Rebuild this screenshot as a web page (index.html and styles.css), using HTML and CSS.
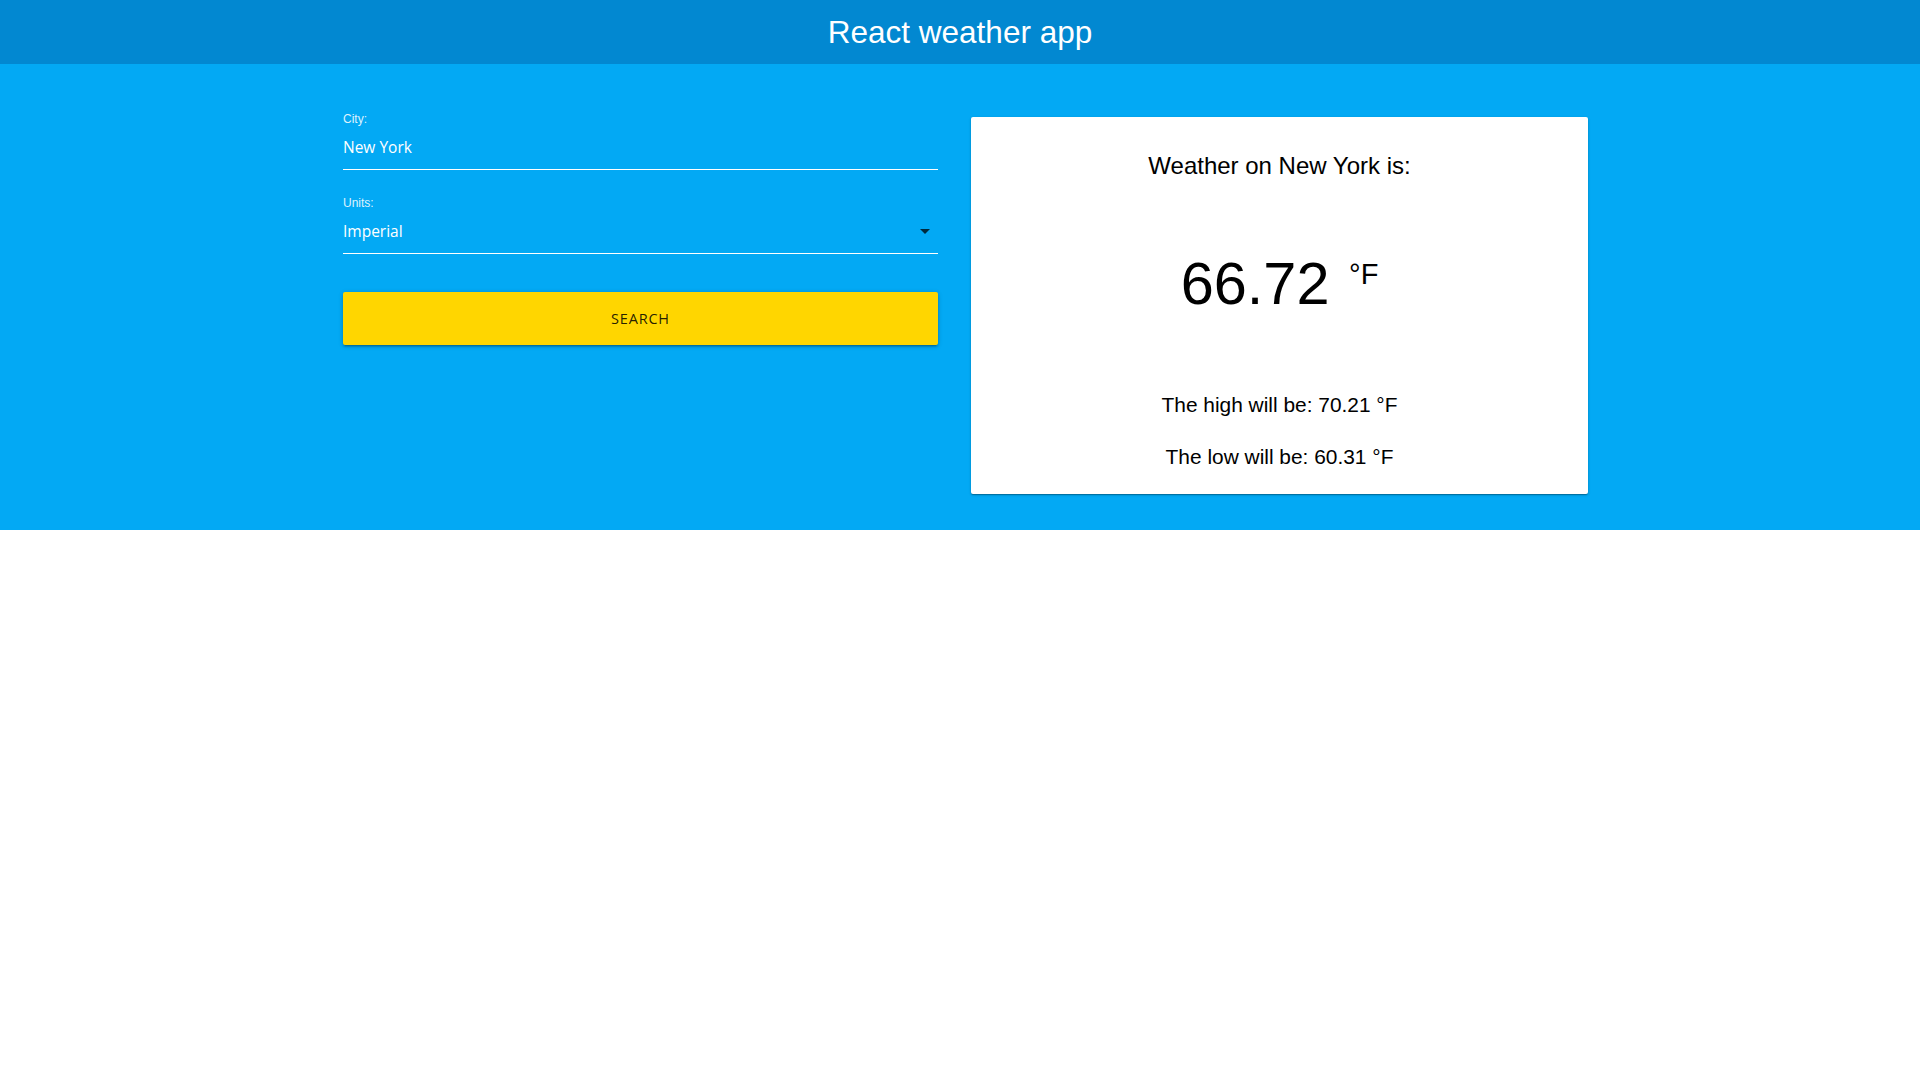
FILE: index.html
```html
<!DOCTYPE html>
<html lang="en">
<head>
<meta charset="utf-8">
<title>React weather app</title>
<link rel="stylesheet" href="styles.css">
</head>
<body>
<header class="app-bar">
  <h1 class="app-title">React weather app</h1>
</header>
<main class="hero">
  <div class="container">
    <form class="search-form">
      <div class="field">
        <label class="field-label">City:</label>
        <div class="field-row">
          <span class="field-value">New York</span>
        </div>
      </div>
      <div class="field">
        <label class="field-label">Units:</label>
        <div class="field-row">
          <span class="field-value">Imperial</span>
          <svg class="select-arrow" width="10" height="5" viewBox="0 0 10 5"><path d="M0 0 L10 0 L5 5 Z" fill="rgba(0,0,0,0.75)"/></svg>
        </div>
      </div>
      <button type="button" class="search-btn">SEARCH</button>
    </form>
    <section class="card">
      <h2 class="card-title">Weather on New York is:</h2>
      <div class="temp">66.72 <span class="temp-unit">°F</span></div>
      <p class="range range-high">The high will be: 70.21 °F</p>
      <p class="range range-low">The low will be: 60.31 °F</p>
    </section>
  </div>
</main>
</body>
</html>
```
FILE: styles.css
```css
* { box-sizing: border-box; }
html, body { margin: 0; padding: 0; background: #ffffff; }
body { font-family: "Liberation Sans", Arial, sans-serif; }

.app-bar {
  height: 64px;
  background: #0288d1;
  display: flex;
  justify-content: center;
}
.app-title {
  margin: 0;
  font-weight: normal;
  font-size: 31.5px;
  line-height: 64px;
  color: #ffffff;
}

.hero {
  background: #03a9f4;
  padding: 48px 0 36px;
}
.container {
  display: flex;
  align-items: flex-start;
  gap: 33px;
  width: 1245px;
  margin-left: calc(50% - 617px);
}

.search-form {
  width: 595px;
  display: flex;
  flex-direction: column;
}
.field { display: flex; flex-direction: column; }
.field + .field { margin-top: 26px; }
.field-label {
  font-size: 12px;
  line-height: 14px;
  color: rgba(255,255,255,0.88);
}
.field-row {
  display: flex;
  align-items: center;
  justify-content: space-between;
  padding: 9px 8px 10px 0;
  border-bottom: 1px solid #ffffff;
}
.field-value {
  font-family: "Open Sans", sans-serif;
  font-size: 15.5px;
  line-height: 24px;
  color: #ffffff;
}
.select-arrow { display: block; }

.search-btn {
  margin-top: 38px;
  height: 53px;
  border: 0;
  border-radius: 2px;
  background: #ffd600;
  color: rgba(0,0,0,0.87);
  font-family: "Open Sans", sans-serif;
  font-size: 14.5px;
  letter-spacing: 0.8px;
  box-shadow: 0 1px 5px rgba(0,0,0,0.2), 0 2px 2px rgba(0,0,0,0.14), 0 3px 1px -2px rgba(0,0,0,0.12);
}

.card {
  margin-top: 5px;
  width: 617px;
  background: #ffffff;
  border-radius: 2px;
  padding: 35px 0 25px;
  text-align: center;
  color: #000000;
  box-shadow: 0 1px 3px rgba(0,0,0,0.2), 0 1px 1px rgba(0,0,0,0.14), 0 2px 1px -1px rgba(0,0,0,0.12);
}
.card-title {
  margin: 0;
  font-weight: normal;
  font-size: 24px;
  line-height: 28px;
}
.temp {
  margin-top: 75px;
  font-size: 59.5px;
  line-height: 58px;
}
.temp-unit {
  font-size: 29px;
  line-height: 29px;
  vertical-align: 20px;
  margin-left: 3px;
}
.range {
  margin: 0;
  font-size: 20.9px;
  line-height: 24px;
}
.range-high { margin-top: 80px; }
.range-low { margin-top: 28px; }
```
